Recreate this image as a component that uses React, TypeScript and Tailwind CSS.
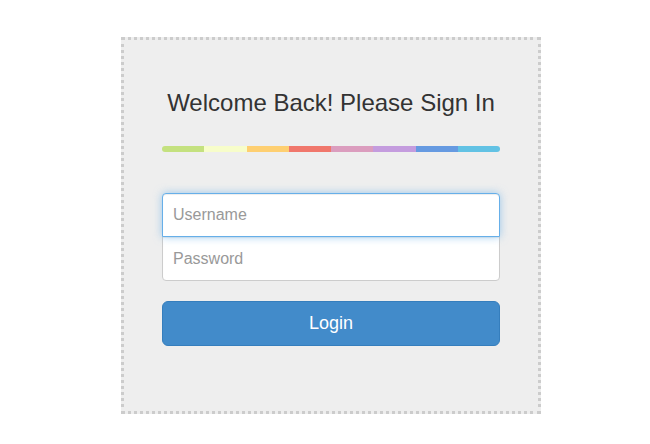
import React from "react";

const stripes = [
  "bg-[#c4e17f]",
  "bg-[#f7fdca]",
  "bg-[#fecf71]",
  "bg-[#f0776c]",
  "bg-[#db9dbe]",
  "bg-[#c49cde]",
  "bg-[#669ae1]",
  "bg-[#62c2e4]",
];

const App: React.FC = () => {
  return (
    <div className="min-h-screen bg-white pl-[121px] pt-[37px] font-['Liberation_Sans',Arial,sans-serif]">
      <div className="w-[420px] border-[3px] border-dotted border-[#ccc] bg-[#eee] px-[38px] pt-[51px] pb-[65px]">
        {/* Heading */}
        <h2 className="text-center text-[24px] leading-[24px] text-[#333]">
          Welcome Back! Please Sign In
        </h2>

        {/* Colour stripe */}
        <div className="mt-[31px] flex h-[6px] overflow-hidden rounded-[4px]">
          {stripes.map((c) => (
            <div key={c} className={`flex-1 ${c}`} />
          ))}
        </div>

        {/* Fields */}
        <div className="mt-[41px] flex flex-col">
          <input
            type="text"
            placeholder="Username"
            className="relative z-10 h-[44px] w-full rounded-t-[4px] border border-[#66afe9] bg-white px-[10px] text-[16px] text-[#555] shadow-[inset_0_1px_1px_rgba(0,0,0,0.075),0_0_8px_rgba(102,175,233,0.6)] outline-none placeholder:text-[#999]"
          />
          <input
            type="password"
            placeholder="Password"
            className="-mt-px h-[45px] w-full rounded-b-[4px] border border-[#ccc] bg-white px-[10px] text-[16px] text-[#555] shadow-[inset_0_1px_1px_rgba(0,0,0,0.075)] outline-none placeholder:text-[#999]"
          />
        </div>

        <button className="mt-[20px] h-[45px] w-full rounded-[6px] border border-[#357ebd] bg-[#428bca] text-[18px] text-white">
          Login
        </button>
      </div>
    </div>
  );
};

export default App;
